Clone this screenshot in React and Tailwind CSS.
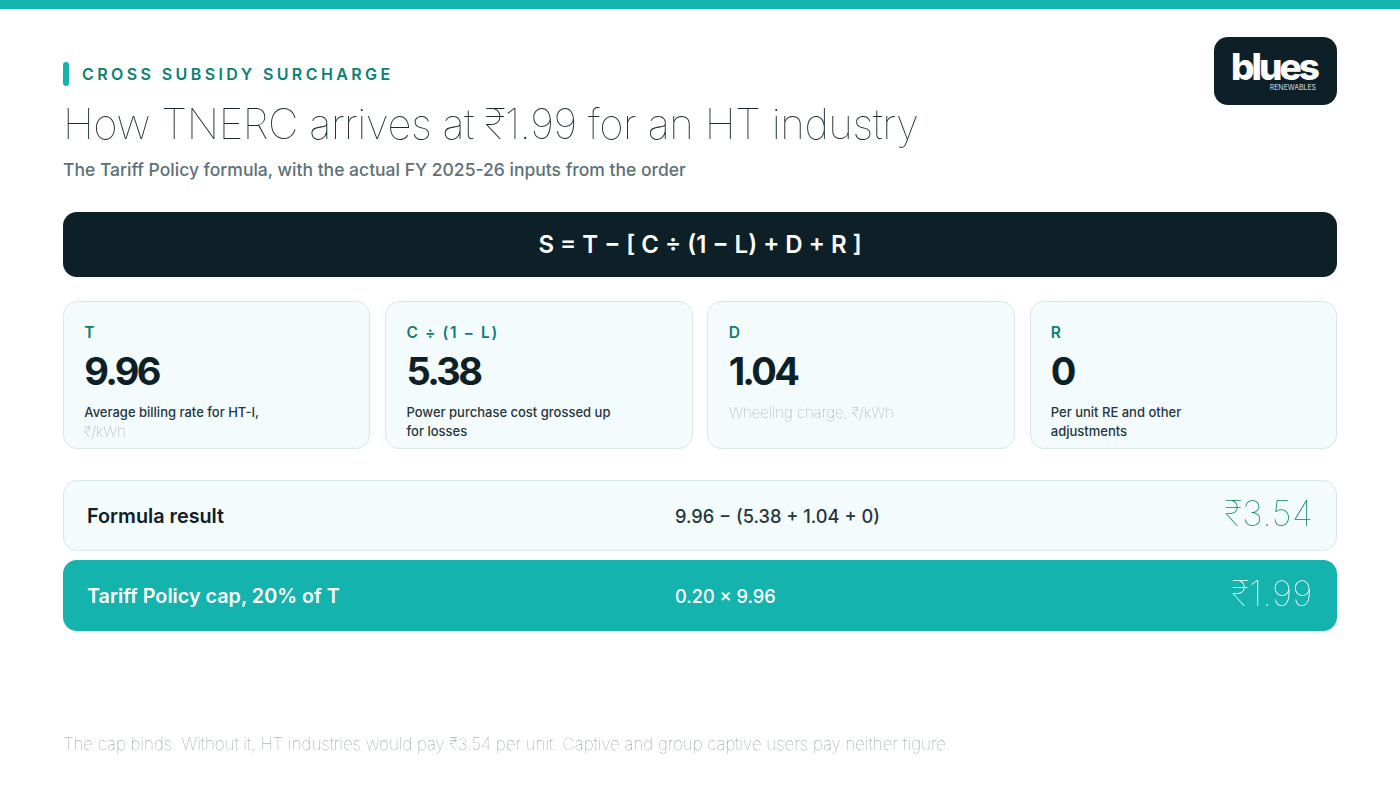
function Card({ label, value, children }) {
  return (
    <div className="flex-1 h-[148px] rounded-[14px] border border-[#d8e8e6] bg-[#f4fbfc] px-[20.3px] pt-[21px]">
      <div className="text-[15.5px] leading-[20px] font-semibold tracking-[1.6px] text-[#0b7f74]">{label}</div>
      <div className="mt-[5px] text-[38px] leading-[46px] font-bold tracking-[-2.7px] text-[#0e2027]">{value}</div>
      <div className="mt-[9px] w-[208px] text-[13px] leading-[19px] font-medium text-[#24363c]">{children}</div>
    </div>
  );
}
function Thin({ children }) {
  return <span className="inline-block text-[15px] font-thin text-[#8b989c] will-change-transform">{children}</span>;
}
export default function App() {
  return (
    <div className="relative w-[1400px] h-[788px] overflow-hidden bg-white font-['Inter',sans-serif] antialiased">
      <div className="h-[9px] bg-[#14b3ad]" />
      <div className="px-[63px]">
        <div className="flex justify-between">
          <div className="pt-[53px]">
            <div className="flex items-center gap-[13px]">
              <div className="w-[6px] h-[24px] rounded-[3px] bg-[#14b3ad]" />
              <div className="text-[16px] leading-[24px] font-semibold tracking-[3.4px] text-[#0b7f74]">CROSS SUBSIDY SURCHARGE</div>
            </div>
            <h1 className="mt-[15px] text-[42px] leading-[46px] font-thin tracking-[-0.47px] text-[#1a2a30] will-change-transform">How TNERC arrives at ₹1.99 for an HT industry</h1>
            <p className="mt-[10px] text-[17.5px] leading-[26px] font-medium text-[#5d7077]">The Tariff Policy formula, with the actual FY 2025-26 inputs from the order</p>
          </div>
          <div className="mt-[28px] flex h-[68px] w-[123px] flex-col items-end rounded-[14px] bg-[#0e2027] pr-[20px] pt-[13px] text-white">
            <div className="text-[37px] leading-[34px] font-extrabold tracking-[-3px]">blues</div>
            <div className="pr-[1px] text-[7px] leading-[8px] font-light">RENEWABLES</div>
          </div>
        </div>
        <div className="mt-[29px] flex h-[65px] items-center justify-center rounded-[14px] bg-[#0e2027] text-[24px] font-semibold text-white">
          S = T − [ C ÷ (1 − L) + D + R ]
        </div>
        <div className="mt-[24px] flex gap-[14.7px]">
          <Card label="T" value="9.96">Average billing rate for HT-I, <Thin>₹/kWh</Thin></Card>
          <Card label="C ÷ (1 − L)" value="5.38">Power purchase cost grossed up for losses</Card>
          <Card label="D" value="1.04"><Thin>Wheeling charge, ₹/kWh</Thin></Card>
          <Card label="R" value="0">Per unit RE and other adjustments</Card>
        </div>
        <div className="mt-[31px] flex h-[71px] items-center rounded-[14px] border border-[#d8e8e6] bg-[#f4fbfc] px-[23px]">
          <div className="w-[588px] pt-[3px] text-[19.8px] font-semibold text-[#0e2027]">Formula result</div>
          <div className="flex-1 pt-[3px] text-[18.2px] font-medium text-[#24363c]">9.96 − (5.38 + 1.04 + 0)</div>
          <div className="pb-[4px] text-[35px] font-thin tracking-[0.5px] text-[#0b7f74] will-change-transform">₹3.54</div>
        </div>
        <div className="mt-[9px] flex h-[71px] items-center rounded-[14px] bg-[#14b3ad] px-[24px] text-white">
          <div className="w-[588px] pt-[3px] text-[19.8px] font-semibold">Tariff Policy cap, 20% of T</div>
          <div className="flex-1 pt-[3px] text-[18.2px] font-medium">0.20 × 9.96</div>
          <div className="pb-[4px] text-[35px] font-thin tracking-[0.5px] will-change-transform">₹1.99</div>
        </div>
        <p className="mt-[101px] text-[16.95px] leading-[24px] font-thin text-[#8b989c] will-change-transform">The cap binds. Without it, HT industries would pay ₹3.54 per unit. Captive and group captive users pay neither figure.</p>
      </div>
    </div>
  );
}
